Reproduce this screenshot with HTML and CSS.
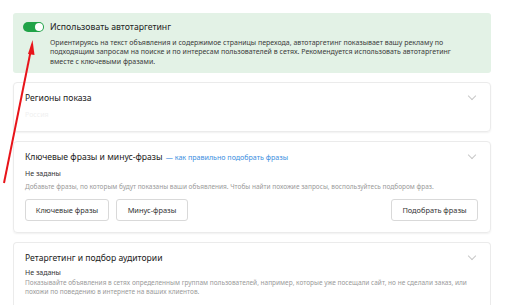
FILE: index.html
```html
<!DOCTYPE html>
<html lang="ru">
<head>
    <meta charset="UTF-8">
    <meta name="viewport" content="width=device-width, initial-scale=1.0">
    <title>Автотаргетинг</title>
    <link rel="stylesheet" href="styles.css">
</head>
<body>
    <div class="page">
        <div class="autotarget">
            <span class="toggle"><span class="knob"></span></span>
            <div class="autotarget-body">
                <div class="autotarget-title">Использовать автотаргетинг</div>
                <p class="autotarget-text">Ориентируясь на текст объявления и содержимое страницы перехода, автотаргетинг показывает вашу рекламу по подходящим запросам на поиске и по интересам пользователей в сетях. Рекомендуется использовать автотаргетинг вместе с ключевыми фразами.</p>
            </div>
        </div>

        <div class="card">
            <div class="card-head">
                <h2>Регионы показа</h2>
                <span class="chevron"></span>
            </div>
            <div class="placeholder">Россия</div>
        </div>

        <div class="card">
            <div class="card-head">
                <h2>Ключевые фразы и минус-фразы <a href="#" class="help">— как правильно подобрать фразы</a></h2>
                <span class="chevron"></span>
            </div>
            <div class="state">Не заданы</div>
            <p class="hint">Добавьте фразы, по которым будут показаны ваши объявления. Чтобы найти похожие запросы, воспользуйтесь подбором фраз.</p>
            <div class="buttons">
                <button class="btn btn-wide">Ключевые фразы</button>
                <button class="btn">Минус-фразы</button>
                <button class="btn btn-pick">Подобрать фразы</button>
            </div>
        </div>

        <div class="card card-last">
            <div class="card-head">
                <h2>Ретаргетинг и подбор аудитории</h2>
                <span class="chevron"></span>
            </div>
            <div class="state">Не заданы</div>
            <p class="hint hint-tight">Показывайте объявления в сетях определенным группам пользователей, например, которые уже посещали сайт, но не сделали заказ, или похожи по поведению в интернете на ваших клиентов.</p>
        </div>
    </div>

    <!-- annotation arrow drawn over the screenshot -->
    <svg class="arrow" width="512" height="305" viewBox="0 0 512 305">
        <line x1="4" y1="183" x2="30.5" y2="52" stroke="#e8141a" stroke-width="2"/>
        <polygon points="32.5,40 28,54 34.5,55" fill="#e8141a"/>
    </svg>
</body>
</html>
```

FILE: styles.css
```css
* {
    margin: 0;
    padding: 0;
    box-sizing: border-box;
}

body {
    font-family: "Noto Sans", "Open Sans", sans-serif;
    background: #fff;
    color: #222;
    width: 512px;
    height: 305px;
    overflow: hidden;
    position: relative;
}

.page {
    width: 478px;
    margin: 13px 0 0 13px;
    display: flex;
    flex-direction: column;
    gap: 9px;
}

.autotarget {
    background: #e3f2e6;
    border-radius: 3px;
    padding: 7px 25px 7px 10px;
    display: flex;
    gap: 6px;
    height: 60px;
}

.toggle {
    flex: none;
    width: 21px;
    height: 10px;
    margin-top: 2px;
    border-radius: 5px;
    background: #21a348;
    display: flex;
    justify-content: flex-end;
    align-items: center;
    padding: 1px;
}

.knob {
    width: 8px;
    height: 8px;
    border-radius: 50%;
    background: #fff;
}

.autotarget-title {
    font-size: 8.7px;
    line-height: 14px;
    color: #222;
}

.autotarget-text {
    margin-top: 4px;
    font-size: 7px;
    line-height: 9.4px;
    color: #3a3a3a;
}

.card {
    border: 1px solid #ebebeb;
    border-radius: 4px;
    box-shadow: 0 1px 2px rgba(0, 0, 0, 0.06);
    padding: 9px 12px 11px 11px;
}

.card-last {
    height: 64px;
    border-bottom: none;
    border-radius: 4px 4px 0 0;
    box-shadow: none;
}

.card-head {
    display: flex;
    justify-content: space-between;
    align-items: center;
}

.card-head h2 {
    font-size: 8.6px;
    line-height: 13px;
    font-weight: normal;
    color: #222;
}

.help {
    font-size: 7.1px;
    color: #3b8ee0;
    text-decoration: none;
    margin-left: 1px;
}

.chevron {
    width: 6px;
    height: 6px;
    border-right: 1px solid #c8c8c8;
    border-bottom: 1px solid #c8c8c8;
    transform: rotate(45deg);
    margin: 0 3px 5px 0;
}

.placeholder {
    margin-top: 5px;
    font-size: 7px;
    line-height: 10px;
    color: #f0f0f0;
}

.state {
    margin-top: 5px;
    font-size: 7px;
    line-height: 10px;
    color: #333;
}

.card-last .state {
    margin-top: 3px;
}

.hint {
    margin-top: 2.5px;
    font-size: 6.5px;
    line-height: 10px;
    color: #9a9a9a;
}

.hint-tight {
    margin-top: 1px;
    line-height: 8.5px;
}

.buttons {
    margin-top: 7.5px;
    display: flex;
    gap: 7px;
}

.btn {
    font-family: inherit;
    font-size: 7.4px;
    color: #333;
    background: #fff;
    border: 1px solid #d9d9d9;
    border-radius: 3px;
    height: 22px;
    width: 72px;
}

.btn-wide {
    width: 84px;
}

.btn-pick {
    width: 87px;
    margin-left: auto;
}

.arrow {
    position: absolute;
    left: 0;
    top: 0;
    pointer-events: none;
}
```
